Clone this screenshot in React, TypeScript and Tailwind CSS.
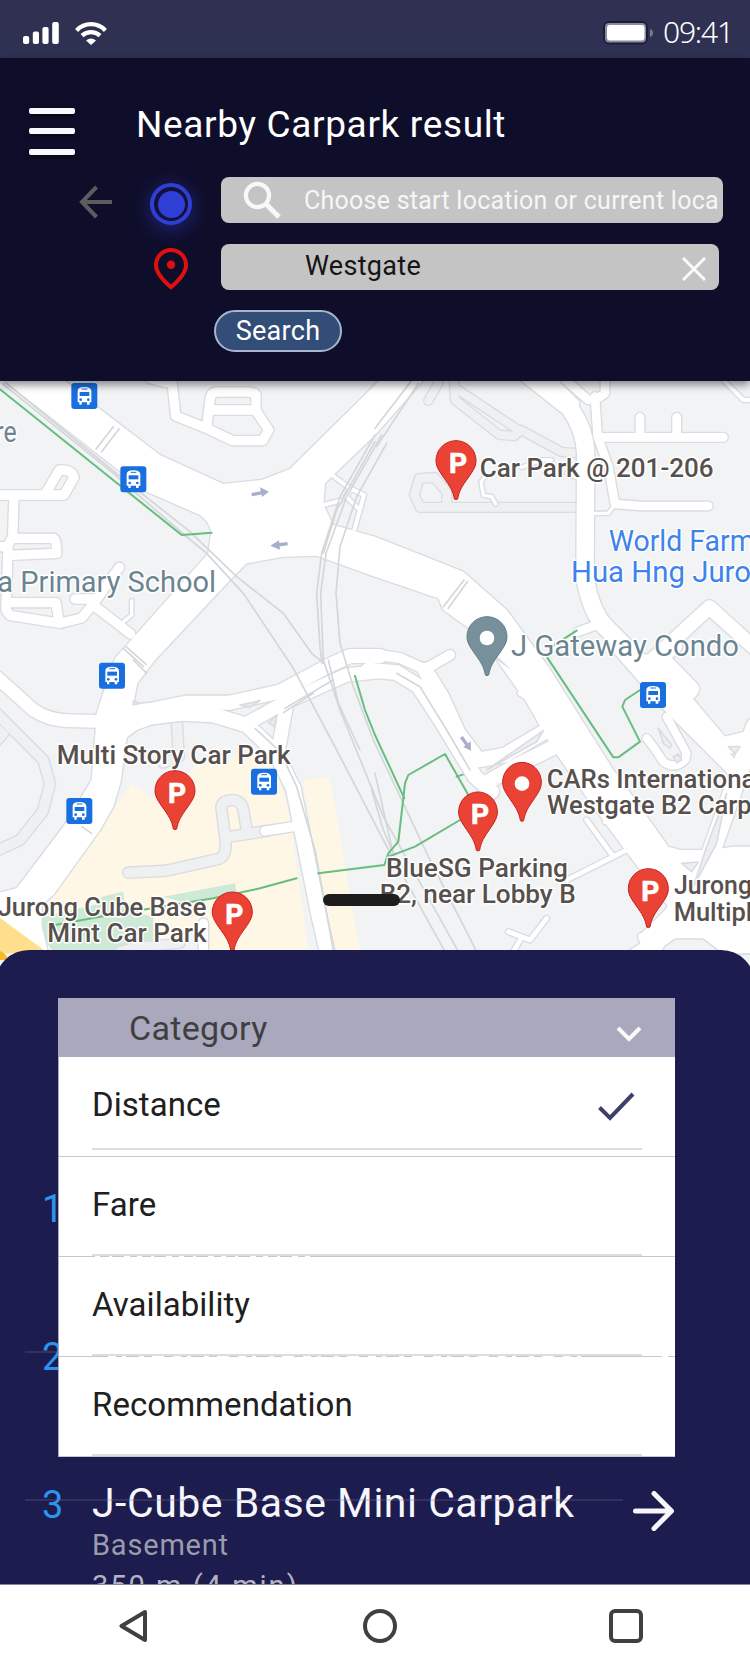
import React from "react";

type Road = { d: string; w: number; q?: "A" | "B" | "C" | "D" };

// The map is drawn in four tiles; each tile has its own origin.
const origin = { A: "translate(0 0)", B: "translate(1125 0)", C: "translate(0 840)", D: "translate(1125 840)" };

const softRoads: Road[] = [
  { q: "B", w: 26, d: "M615 382H135L118 345 132 296 178 292 215 335V375" },
  { q: "B", w: 24, d: "M620 220L560 216 438 150 418 168 372 164 240 60 236 -10M250 30L430 150M160 62L190 10" },
  { q: "C", w: 30, d: "M-10 160L130 300 150 372 128 455 60 540 -10 572" },
  { q: "C", w: 30, d: "M530 170L536 290 490 308" },
  { q: "C", w: 30, d: "M385 638L500 632 655 597Q682 588 676 540L664 440Q668 420 700 420 726 425 730 450L742 520M676 532L800 513" },
  { q: "C", w: 20, d: "M-10 200L14 222-10 250" },
  { q: "C", w: 26, d: "M360 875L400 862 540 850" },
];

const roads: Road[] = [
  { q: "A", w: 28, d: "M515 -5L527 108 620 145 698 182 788 182 806 150 768 92 768 45Q765 36 740 36H650Q632 38 630 60L620 140M632 90H765M450 -5L500 8" },
  { q: "A", w: 28, d: "M-10 345H192L222 292Q215 268 178 270L140 335M42 345L38 470 22 500H-10M38 475H160Q170 478 170 520L30 526M24 500L18 690 30 706 180 730 245 714 280 672 358 562M25 668H168L177 725M225 657H285M280 675L392 762" },
  { q: "A", w: 10, d: "M395 662V705L365 730" },
  { q: "A", w: 12, d: "M1000 288L1050 325 1092 345 1063 450M970 375L1020 362M1050 330L1038 350 1075 385" },
  { q: "B", w: 26, d: "M660 50L668 170 700 260 720 372 800 378H1000M680 172H1045M795 170V112M905 170V112M690 -10V40L660 60" },
  { q: "B", w: 10, d: "M362 372L350 350 325 346 318 305 330 290M440 262L500 240 530 240M575 280L620 300M650 400H700L718 375" },
  { q: "B", w: 52, d: "M440 -30L585 85Q630 150 632 220L630 590Q645 690 690 740L840 890" },
  { q: "B", w: 26, d: "M560 -10L640 60M540 10L600 70M610 755L665 735" },
  { q: "B", w: 42, d: "M820 850L1003 682 1140 805M900 800L820 860" },
  { q: "B", w: 12, d: "M1040 -5L1105 60H1130" },
  { q: "B", w: 30, d: "M-10 822L75 834 150 868 225 825" },
  { q: "C", w: 38, d: "M-20 42L100 150Q145 180 200 182L320 185" },
  { q: "C", w: 42, d: "M330 165L460 148 560 128 690 128 840 95 990 15 1050 -12 1140 -12" },
  { q: "C", w: 44, d: "M310 260L400 190 450 172 550 160 640 165 740 195 825 275 880 385 955 760 985 890" },
  { q: "C", w: 40, d: "M750 185L860 125 1040 45 1135 35M862 120L835 270" },
  { q: "C", w: 28, d: "M795 513L880 500M610 790V880" },
  { q: "D", w: 44, d: "M-20 30L65 38 130 78 200 185 300 350 350 395" },
  { q: "D", w: 44, d: "M150 30L200 110 250 220 310 300 390 285 500 220M330 370L420 320 540 260" },
  { q: "D", w: 46, d: "M740 -30L880 130 1080 330" },
  { q: "D", w: 54, d: "M820 10L930 130 1040 260 1140 235M910 120L945 88 850 -10M1140 200L1095 330 1060 430 1000 600 920 720 835 860" },
  { q: "D", w: 24, d: "M815 235L835 260 865 305Q900 330 930 300L935 280 875 170" },
  { q: "D", w: 14, d: "M435 100L450 110 520 40M635 480L715 590 755 570M715 590L575 660M400 815L465 840 515 775M440 832L412 880M690 485L720 475" },
  { q: "D", w: 22, d: "M770 880L810 855 800 830 830 815" },
];

const boulevards = [
  "M10 0L355 270 440 335 600 405Q634 430 633 460L625 520 345 835 313 930 290 1000 287 1050 275 1200 190 1340 50 1525-10 1540V1605L150 1740 125 1640 125 1575 160 1545 300 1350 340 1280 362 1205 378 1085 412 910 465 840 690 600 740 550 850 530 950 527 1125 590 1315 655 1330 690 1400 740 1535 870 1490 840 1575 960 1605 1010 1625 1050 1675 1130 1765 1260 1875 1410 1975 1530 2050 1640 2250 1710V1610L2190 1530 2140 1430 2060 1415 2005 1400 1870 1210 1840 1170 1645 860 1520 690 1390 575 1125 470 1000 435 970 375 975 310 1000 285 1125 165 1280-10H1150L870 267 785 300 670 312 480 225 290 80 180-10H0Z",
  "M1875 1410L2005 1580 1925 1660 1955 1725 2025 1675 2110 1675 2170 1720H2260V1400L2200 1400 2130 1410Z",
];

const rails = [
  "M20 10L355 285 570 455 710 590 850 700 935 820 972 850",
  "M0 5L340 280 550 462 620 520 730 640 880 865 1010 1110 1150 1380 1335 1715",
  "M1125 165L1020 350 965 520 950 640 960 800 966 850",
  "M1145 165L1040 350 978 520 962 640 970 840 1020 990 1150 1310 1375 1715",
  "M1160 190L1070 350 1020 500 1008 640 1020 790 1060 920 1120 1080 1290 1440 1430 1715",
  "M1125 185L1010 390 970 520M1240-5L1125 145M1255 10L1130 200M985 840L1015 970 1080 1110",
  "M1115 1230L1150 1350 1185 1430M1125 1180L1175 1400",
  "M288 207L340 140M305 215L357 147M370 805L430 860M378 800L438 853",
  "M400 840L440 880M1330 680L1392 600M1345 685L1402 605M245 1340L275 1360",
  "M765 1045L840 1115 890 1220 945 1410 1000 1710M855 985L1000 900M850 998L940 940M1190 880L1260 920 1340 1050 1410 1170",
];

const greens = [
  "M0 28L545 465 635 458",
  "M165 1635L300 1610 640 1555 780 1525 890 1495M955 1480L1153 1455 1165 1420 1195 1385 1215 1210 1225 1185 1335 1122 1405 1245M1165 1430L1245 1400 1380 1320",
  "M1065 888L1095 990 1125 1065 1213 1255M1370 1190L1388 1184",
  "M1730 752L1655 800 1640 830 1840 1132H1855L1920 1085 1867 980 1875 960 1920 930",
];

function Pin({ x, y, kind = "P", r = 1 }: { x: number; y: number; kind?: "P" | "dot" | "gray"; r?: number }) {
  const gray = kind === "gray";
  return (
    <g transform={`translate(${x} ${y})`}>
      <path
        transform={`scale(${r} 1)`}
        d="M-5 -1C-9 -26-20 -42-36 -64-50 -84-60 -98-60 -116A60 60 0 0 1 60 -116C60 -98 50 -84 36 -64 20 -42 9 -26 5 -1Q0 3-5 -1Z"
        fill={gray ? "#78909c" : "#ea4335"}
        stroke={gray ? "#607d8b" : "#c5221f"}
        strokeWidth="3"
      />
      {kind === "P" ? (
        <text x="6" y="-79" textAnchor="middle" fontSize="84" fontWeight="700" fill="#fff" stroke="#fff" strokeWidth="2">P</text>
      ) : (
        <circle cy="-112" r="22" fill="#fff" />
      )}
    </g>
  );
}

function Bus({ x, y }: { x: number; y: number }) {
  return (
    <g transform={`translate(${x - 39} ${y - 39})`}>
      <rect width="78" height="78" rx="9" fill="#1a6fe0" />
      <path d="M19 24Q19 12 39 12T60 24V58H55V65H47V58H31V65H24V58H19Z" fill="#fff" />
      <path d="M25 27H54V39H25Z" fill="#1a6fe0" />
      <path d="M31 18H48" stroke="#1a6fe0" strokeWidth="3" />
      <circle cx="28" cy="50" r="4" fill="#1a6fe0" />
      <circle cx="51" cy="50" r="4" fill="#1a6fe0" />
    </g>
  );
}

function Label({ x, y, w, s = 80, c = "#57504d", children }: { x: number; y: number; w: number; s?: number; c?: string; children: string }) {
  return (
    <text x={x} y={y} textLength={w} lengthAdjust="spacingAndGlyphs" fontSize={s} fontWeight={s === 80 ? 500 : 400} fill={c} stroke="#fff" strokeWidth="9" strokeLinejoin="round" paintOrder="stroke">
      {children}
    </text>
  );
}

function RoadSet({ list, fill }: { list: Road[]; fill: string }) {
  return (
    <>
      {list.map((r, i) => (
        <path key={"c" + i} transform={origin[r.q ?? "A"]} d={r.d} strokeWidth={r.w + 8} stroke="#d9dce1" />
      ))}
      {list.map((r, i) => (
        <path key={"f" + i} transform={origin[r.q ?? "A"]} d={r.d} strokeWidth={r.w} stroke={fill} />
      ))}
    </>
  );
}

function CityMap() {
  return (
    <svg viewBox="0 3 2250 1797" className="block h-[599px] w-[750px] font-['Roboto',sans-serif]" aria-label="Map">
      <rect width="2250" height="1800" fill="#f1f3f4" />
      <path d="M395 1210L470 1262 620 1130 760 1130 830 1160 870 1320 925 1710H130L160 1540 340 1290ZM910 1200L990 1190 1080 1715H990Z" fill="#fef7e6" />
      <path d="M130 1610L305 1570V1550L370 1535 375 1590 460 1610V1680L350 1715H160Q115 1660 130 1610ZM490 1550L705 1510 710 1540 560 1570Z" fill="#ceead6" />
      <path d="M440 1700L600 1640V1740H420Z" fill="#f1f3f4" />
      <g fill="none" strokeLinecap="round" strokeLinejoin="round">
        <RoadSet list={softRoads} fill="#eef0f2" />
        {roads.map((r, i) => (
          <path key={"rc" + i} transform={origin[r.q ?? "A"]} d={r.d} strokeWidth={r.w + 8} stroke="#d9dce1" />
        ))}
        {boulevards.map((d, i) => (
          <path key={"bc" + i} d={d} stroke="#d9dce1" strokeWidth="8" />
        ))}
        {boulevards.map((d, i) => (
          <path key={"bf" + i} d={d} fill="#fff" />
        ))}
        {roads.map((r, i) => (
          <path key={"rf" + i} transform={origin[r.q ?? "A"]} d={r.d} strokeWidth={r.w} stroke="#fff" />
        ))}
        <path d="M720 975L780 962 750 982ZM805 1028L830 1005 825 1042ZM400 962L418 970 400 975Z" fill="#e6e8eb" stroke="#d9dce1" strokeWidth="5" />
        <path d="M1460 1170L1630 1052 1610 1085ZM2045 1450L2095 1446 2075 1475ZM2185 1100H2220L2205 1122ZM1975 1045L2015 1095 2010 1105 1990 1090ZM2020 1130L2035 1122 2045 1140 2030 1148ZM2120 1400L2180 1240 2150 1390 2080 1520Z" fill="#eceef0" stroke="#d9dce1" strokeWidth="5" />
        {rails.map((d, i) => (
          <path key={"l" + i} d={d} stroke="#d3d7da" strokeWidth="5" />
        ))}
        {greens.map((d, i) => (
          <path key={"g" + i} d={d} stroke="#68bd80" strokeWidth="6" />
        ))}
        <path d="M755 344L788 338M863 491L832 495M1384 1071L1402 1096" stroke="#a9aecd" strokeWidth="10" strokeLinecap="butt" />
        <path d="M780 322L807 335 786 351ZM837 481L811 497 840 509ZM1412 1084L1413 1112 1390 1101Z" fill="#a9aecd" />
      </g>
      <path d="M-5 1610L145 1720H-5Z" fill="#fddf8c" />
      <path d="M-5 1712Q15 1715 25 1740H-5Z" fill="#f9b928" />
      <Bus x={253} y={48} />
      <Bus x={400} y={298} />
      <Bus x={336} y={887} />
      <Bus x={792} y={1205} />
      <Bus x={238} y={1293} />
      <Bus x={1959} y={945} />
      <Label x={-14} y={187} w={64} s={88} c="#6b8490">re</Label>
      <Label x={-8} y={635} w={656} s={88} c="#6b8490">a Primary School</Label>
      <Label x={1439} y={292} w={702}>Car Park @ 201-206</Label>
      <Label x={1826} y={514} w={438} s={88} c="#3f83ea">World Farm</Label>
      <Label x={1713} y={606} w={540} s={88} c="#3f83ea">Hua Hng Juro</Label>
      <Label x={1533} y={827} w={684} s={86} c="#6b8490">J Gateway Condo</Label>
      <Label x={170} y={1152} w={702}>Multi Story Car Park</Label>
      <Label x={-7} y={1608} w={626}>Jurong Cube Base</Label>
      <Label x={142} y={1686} w={478}>Mint Car Park</Label>
      <Label x={1640} y={1225} w={626}>CARs Internationa</Label>
      <Label x={1641} y={1303} w={614}>Westgate B2 Carp</Label>
      <Label x={1158} y={1490} w={546}>BlueSG Parking</Label>
      <Label x={1139} y={1568} w={588}>B2, near Lobby B</Label>
      <Label x={2022} y={1543} w={234}>Jurong</Label>
      <Label x={2021} y={1622} w={236}>Multipl</Label>
      <Pin x={1368} y={358} />
      <Pin x={1461} y={886} kind="gray" />
      <Pin x={525} y={1348} />
      <Pin x={697} y={1712} />
      <Pin x={1566} y={1323} kind="dot" r={0.97} />
      <Pin x={1434} y={1412} r={0.97} />
      <Pin x={1945} y={1642} />
    </svg>
  );
}

function StatusBar() {
  return (
    <div className="flex h-[58px] items-center justify-between bg-gradient-to-b from-[#2f3052] to-[#2f3153] pr-[16px] pl-[23px] pt-2">
      <div className="flex items-center gap-4">
        <svg width="36" height="22" viewBox="0 0 36 22" fill="#fff">
          <rect y="14" width="6.2" height="8" rx="2" />
          <rect x="9.8" y="9.5" width="6.2" height="12.5" rx="2" />
          <rect x="19.4" y="5" width="6.2" height="17" rx="2" />
          <rect x="29.2" width="6.6" height="22" rx="2" />
        </svg>
        <svg width="32" height="23" viewBox="0 0 32 23" fill="none" stroke="#fff" strokeWidth="4.3">
          <path d="M1.6 8.4Q7.5 2.2 16 2.2T30.4 8.4" />
          <path d="M7 13.7Q11 10.2 16 10.2T25 13.7" />
          <path d="M11 18.6Q16 14.4 21 18.6L16 23Z" fill="#fff" stroke="none" />
        </svg>
      </div>
      <div className="flex items-center">
        <svg width="52" height="24" viewBox="0 0 52 24">
          <rect x="1" y="1" width="43" height="21.5" rx="5" fill="#8a8ba2" stroke="#1d1d3a" strokeWidth="2" />
          <rect x="4" y="4" width="37.5" height="15.5" rx="3" fill="#fff" />
          <path d="M47 8Q50 9 50 12T47 16Z" fill="#777895" />
        </svg>
        <span className="ml-[8px] w-[71px] whitespace-nowrap pb-[2px] font-['Noto_Sans',sans-serif] text-[30px] leading-none font-light tracking-[-1.2px] text-white">09:41</span>
      </div>
    </div>
  );
}

function Header() {
  return (
    <header className="relative z-10 h-[323px] bg-[#0f0e2a] pt-[43px] shadow-[0_4px_8px_rgba(0,0,0,0.45)]">
      <div className="flex h-[54px] items-start pl-[29px]">
        <div className="mt-[7px] flex flex-col gap-[14.4px]">
          <span className="h-[6px] w-[46px] rounded-[2px] bg-[#f8f8ff] shadow-[0_3px_4px_rgba(0,0,0,0.5)]" />
          <span className="h-[6px] w-[46px] rounded-[2px] bg-[#f8f8ff] shadow-[0_3px_4px_rgba(0,0,0,0.5)]" />
          <span className="h-[6px] w-[46px] rounded-[2px] bg-[#f8f8ff] shadow-[0_3px_4px_rgba(0,0,0,0.5)]" />
        </div>
        <h1 className="ml-[61px] whitespace-nowrap text-[37px] leading-[48px] tracking-[0.65px] text-white">Nearby Carpark result</h1>
      </div>
      <div className="mt-[22px] flex h-[46px] items-center">
        <svg className="mt-[4px] ml-[79px] shrink-0" width="34" height="34" viewBox="0 0 34 34" fill="none" stroke="#5c5c5f" strokeWidth="4">
          <path d="M17.5 2L3 17 17.5 32M3 17H33" />
        </svg>
        <div className="mt-[8px] ml-[37px] flex size-[42px] shrink-0 items-center justify-center rounded-full border-4 border-[#2f3fd6] bg-[#12123c] shadow-[0_4px_18px_2px_rgba(47,63,214,0.4)]">
          <span className="size-[27px] rounded-full bg-[#2f3fd6]" />
        </div>
        <div className="ml-[29px] flex h-[46px] w-[502px] items-center overflow-hidden rounded-[8px] bg-[#c4c4c4] pl-[22px]">
          <svg className="shrink-0" width="38" height="38" viewBox="0 0 38 38" fill="none" stroke="#f7f9f9">
            <circle cx="14.5" cy="14.5" r="11.6" strokeWidth="4.2" />
            <path d="M23 23L36 36" strokeWidth="5" />
          </svg>
          <span className="ml-[23px] whitespace-nowrap text-[25px] leading-none tracking-[0.25px] text-[#f5f7f7]">Choose start location or current loca</span>
        </div>
      </div>
      <div className="mt-[21px] flex h-[46px] items-center">
        <svg className="mt-[3px] ml-[154px] shrink-0" width="34" height="42" viewBox="0 0 34 42" fill="none" stroke="#e01010" strokeWidth="4">
          <path d="M17 39.2Q2 26.5 2 17A15 15 0 0 1 32 17Q32 26.5 17 39.2Z" />
          <circle cx="17" cy="16.8" r="4.2" fill="#e01010" stroke="none" />
        </svg>
        <div className="ml-[33px] flex h-[46px] w-[498px] items-center justify-between rounded-[8px] bg-[#c4c4c4] pr-[13px] pl-[84px]">
          <span className="-mt-[2px] text-[27px] leading-none tracking-[0.3px] text-[#151515]">Westgate</span>
          <svg className="mt-[4px]" width="24" height="24" viewBox="0 0 24 24" stroke="#fafafa" strokeWidth="3">
            <path d="M1 1L23 23M23 1L1 23" />
          </svg>
        </div>
      </div>
      <button className="mt-[20px] ml-[214px] flex h-[42px] w-[128px] items-center justify-center rounded-full border-2 border-[#aab4cc] bg-[#324d77] text-[27px] leading-none tracking-[0.3px] text-white">Search</button>
    </header>
  );
}

const options = ["Distance", "Fare", "Availability", "Recommendation"];

function CategoryMenu() {
  return (
    <div className="absolute top-[48px] left-[58px] w-[617px] border-l border-[#a9a7bd] bg-white text-[#202020]">
      <div className="flex h-[59px] items-center justify-between bg-[#aaa8bd] pr-[33px] pl-[70px] text-[34px] leading-none tracking-[0.3px] text-[#3f3f42]">
        <span>Category</span>
        <svg className="mt-[12px]" width="26" height="16" viewBox="0 0 26 16" fill="none" stroke="#fafafa" strokeWidth="4">
          <path d="M2 2L13 13 24 2" />
        </svg>
      </div>
      {options.map((name, i) => (
        <div key={name} className="flex h-[100px] flex-col border-b border-[#c6c6cc] px-[33px] last:border-[#a9a7bd]">
          <div className={i === 0 ? "flex h-[93px] items-center justify-between border-b-2 border-[#dddddf] pb-[2px]" : "flex h-[99px] items-center border-b-2 border-[#dddde0] pb-[8px]"}>
            <span className="mt-[6px] text-[33px] leading-[40px] tracking-[0.05px]">{name}</span>
            {i === 0 && (
              <svg className="mt-[10px] mr-[7px]" width="37" height="29" viewBox="0 0 37 29" fill="none" stroke="#3f4069" strokeWidth="4">
                <path d="M1.5 15.5L12 26 35 2" />
              </svg>
            )}
          </div>
        </div>
      ))}
      <svg className="absolute top-[258px] left-0 h-[1px] w-[617px]" viewBox="0 0 617 1" stroke="#fff" strokeWidth="2">
        <path d="M36 0.5H256" strokeDasharray="5 9 3 12 6 7" />
      </svg>
      <svg className="absolute top-[358px] left-0 h-[1px] w-[617px]" viewBox="0 0 617 1" stroke="#fff" strokeWidth="2">
        <path d="M49 0.5H525M603 0.5H609" strokeDasharray="8 6 4 13 5 8 12 9" />
      </svg>
    </div>
  );
}

function Result({ n, name, place, distance }: { n: number; name?: string; place?: string; distance?: string }) {
  return (
    <div className="relative flex h-[148px]">
      <span className="-mt-[4px] w-[92px] pl-[42px] text-[38px] leading-[48px] text-[#2b95ee]">{n}</span>
      {name && (
        <div className="-mt-[6px] flex w-[541px] flex-col whitespace-nowrap">
          <span className="text-[41px] leading-[48px] tracking-[0.5px] text-[#f6f6fb]">{name}</span>
          <span className="mt-[-2px] text-[29px] leading-[40px] tracking-[0.8px] text-[#9a9bab]">{place}</span>
          <span className="mt-[1px] text-[29px] leading-[40px] tracking-[2px] text-[#b4b4c4]">{distance}</span>
        </div>
      )}
      {name && (
        <svg className="mt-[6px]" width="42" height="40" viewBox="0 0 42 40" fill="none" stroke="#f6f6fb" strokeWidth="5" strokeLinecap="round" strokeLinejoin="round">
          <path d="M2.5 20H38M21 2.5L38.5 20 21 37.5" />
        </svg>
      )}
      {n > 1 && <span className="absolute top-[14px] left-[25px] h-[2px] w-[598px] bg-[#7a6f9a]/25" />}
    </div>
  );
}

export default function App() {
  return (
    <div className="flex h-[1667px] w-[750px] flex-col overflow-hidden bg-white font-['Roboto',sans-serif]">
      <StatusBar />
      <Header />
      <div className="relative h-[569px]">
        <CityMap />
        <span className="absolute top-[513px] left-[323px] h-[12px] w-[77px] rounded-full bg-[#1d1d1d]" />
      </div>
      <main className="relative z-10 mx-[-5px] h-[634px] overflow-hidden rounded-t-[34px] bg-[#1c1c4e] px-[5px] pt-[239px]">
        <Result n={1} />
        <Result n={2} />
        <Result n={3} name="J-Cube Base Mini Carpark" place="Basement" distance="350 m (4 min)" />
        <div className="absolute top-0 left-[5px]">
          <CategoryMenu />
        </div>
      </main>
      <nav className="relative z-20 flex h-[83px] items-center justify-between border-t border-[#85859c] bg-white pr-[107px] pl-[119px]">
        <svg className="-mt-px" width="30" height="34" viewBox="0 0 30 34" fill="none" stroke="#404040" strokeWidth="4" strokeLinejoin="round">
          <path d="M26 3L2.5 17 26 31Z" />
        </svg>
        <svg className="-mt-px ml-[2px]" width="34" height="34" viewBox="0 0 34 34" fill="none" stroke="#404040" strokeWidth="4">
          <circle cx="17" cy="17" r="15" />
        </svg>
        <svg className="-mt-px" width="34" height="34" viewBox="0 0 34 34" fill="none" stroke="#404040" strokeWidth="4">
          <rect x="2" y="2" width="30" height="30" rx="4" />
        </svg>
      </nav>
    </div>
  );
}
